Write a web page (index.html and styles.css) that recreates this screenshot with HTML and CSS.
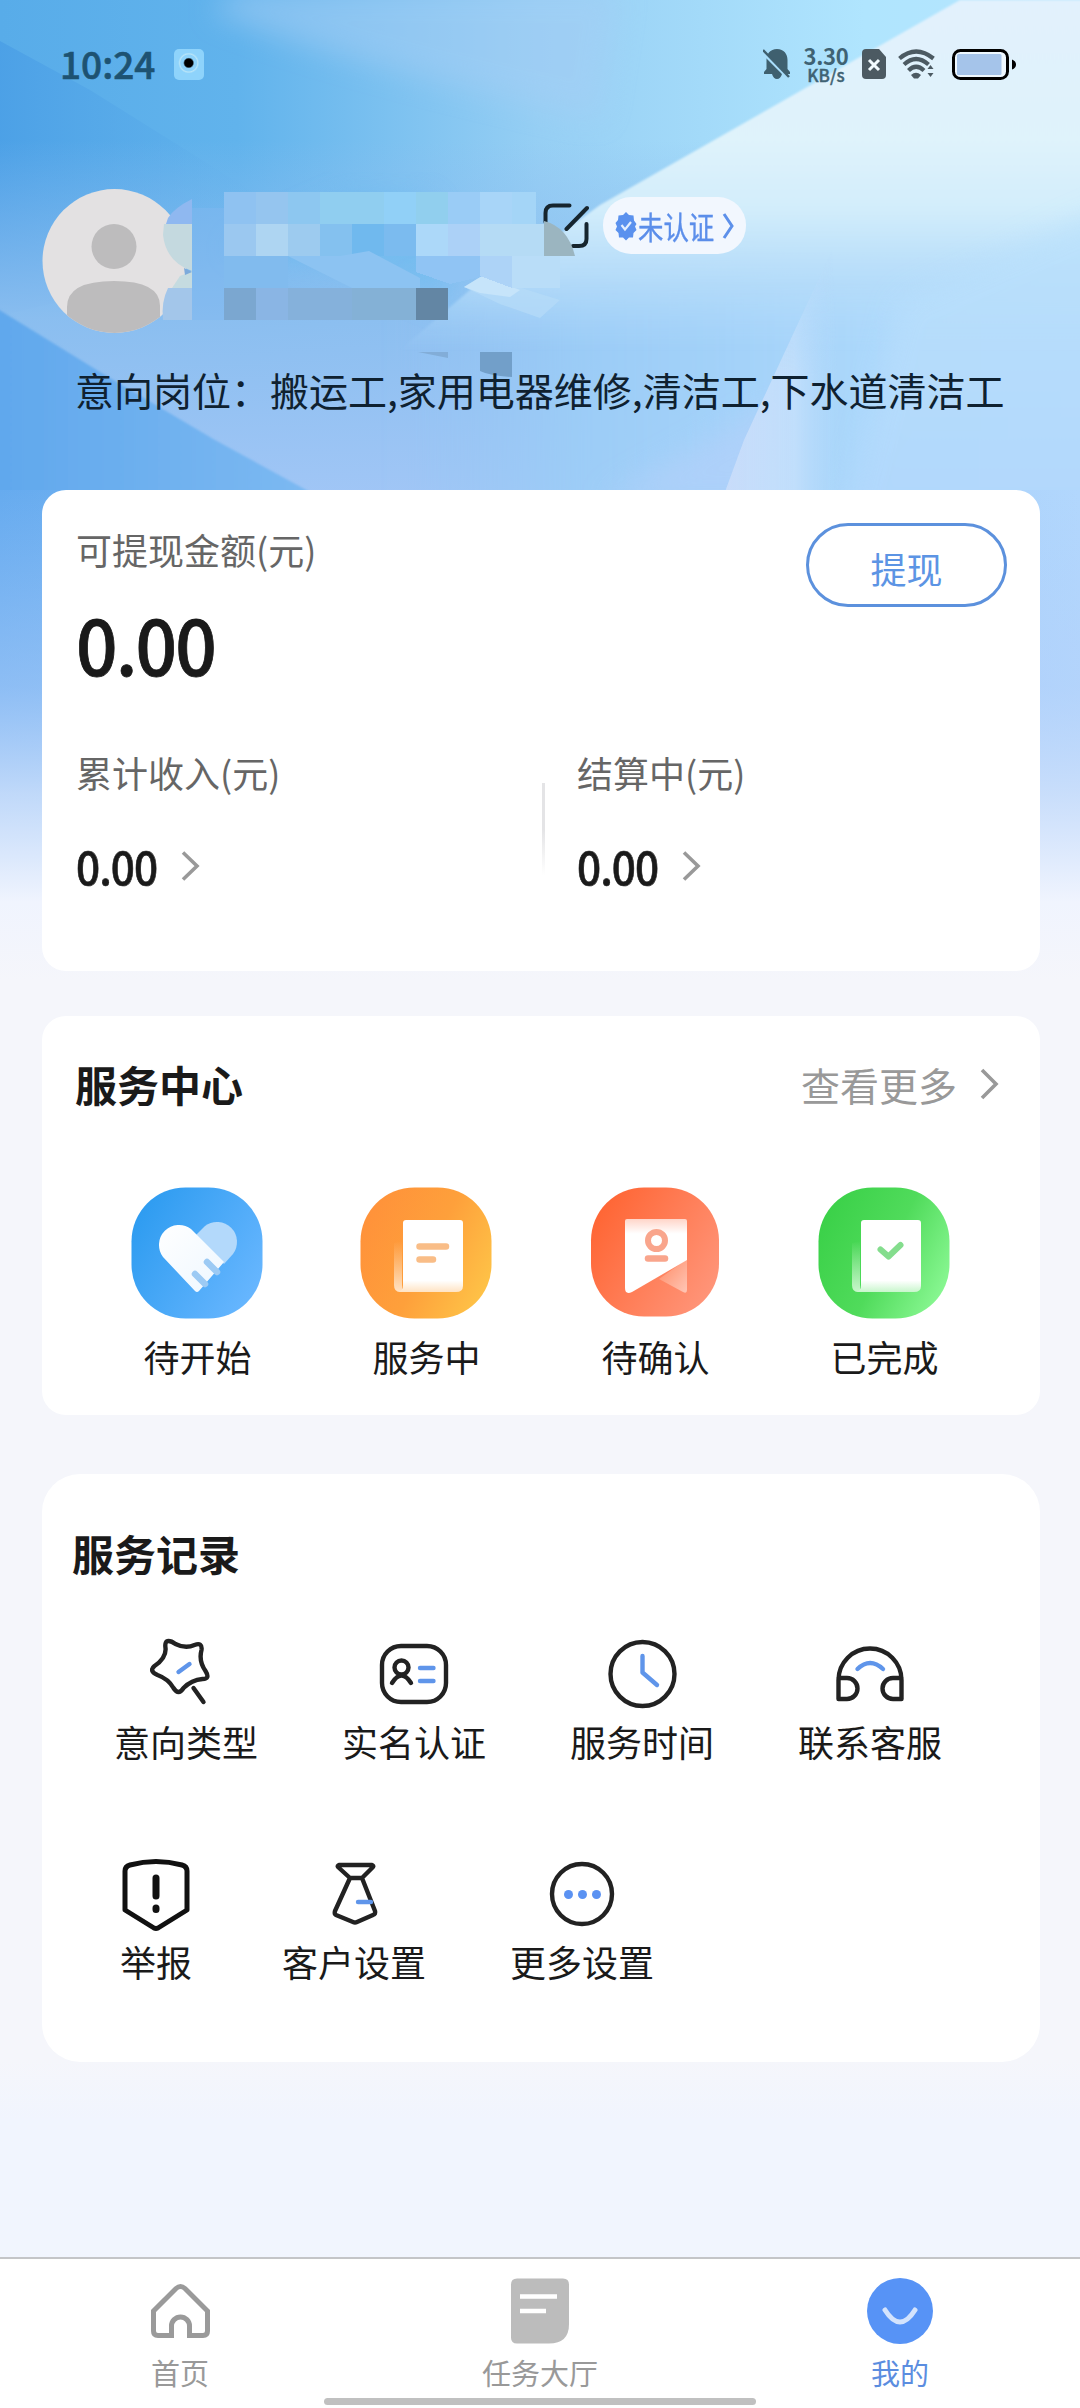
FILE: index.html
```html
<!DOCTYPE html>
<html lang="zh-CN">
<head>
<meta charset="utf-8">
<title>我的</title>
<link rel="stylesheet" href="styles.css">
</head>
<body>
<div class="page">
  <svg class="backdrop" viewBox="0 0 1080 980" aria-hidden="true">
    <defs>
      <linearGradient id="sky" x1="0" y1="0" x2="1" y2="0">
        <stop offset="0" stop-color="#58ace9"/><stop offset=".22" stop-color="#61b3ec"/><stop offset=".5" stop-color="#96cff4"/><stop offset=".8" stop-color="#b0e5fe"/><stop offset="1" stop-color="#b5e5fe"/>
      </linearGradient>
      <linearGradient id="wedge" x1="0" y1="0" x2="1" y2="0">
        <stop offset="0" stop-color="#4a9fe6"/><stop offset=".5" stop-color="#58aae9" stop-opacity=".6"/><stop offset="1" stop-color="#68baee" stop-opacity="0"/>
      </linearGradient>
      <linearGradient id="low" x1="0" y1="0" x2="0" y2="1">
        <stop offset="0" stop-color="#8dbcf0" stop-opacity="0"/><stop offset=".5" stop-color="#8dbff0" stop-opacity=".95"/><stop offset="1" stop-color="#a1c6f6"/>
      </linearGradient>
      <linearGradient id="ray" x1="0" y1="0" x2="0" y2="1">
        <stop offset="0" stop-color="#e2f1fd"/><stop offset=".4" stop-color="#dff3fb"/><stop offset=".6" stop-color="#d2edfb"/><stop offset=".78" stop-color="#bfe2fb" stop-opacity=".8"/><stop offset="1" stop-color="#b0d9fb" stop-opacity="0"/>
      </linearGradient>
      <linearGradient id="base" x1="0" y1="0" x2="1" y2="0">
        <stop offset="0" stop-color="#98c6f5" stop-opacity="0"/><stop offset=".22" stop-color="#9ccdf7" stop-opacity=".9"/><stop offset=".6" stop-color="#acd8fb"/><stop offset="1" stop-color="#b4d9fd"/>
      </linearGradient>
      <linearGradient id="facet" x1="0" y1="0" x2="1" y2="0">
        <stop offset="0" stop-color="#c8dcfa"/><stop offset=".6" stop-color="#c5e0fb" stop-opacity=".85"/><stop offset="1" stop-color="#b6dafc" stop-opacity="0"/>
      </linearGradient>
      <linearGradient id="facetfade" x1="0" y1="0" x2="0" y2="1">
        <stop offset="0" stop-color="#fff" stop-opacity=".3"/><stop offset=".5" stop-color="#fff"/>
      </linearGradient>
      <mask id="facetmask"><rect x="700" y="250" width="180" height="250" fill="url(#facetfade)"/></mask>
      <linearGradient id="corner" x1="0" y1="0" x2="0" y2="1">
        <stop offset="0" stop-color="#bce3fc"/><stop offset="1" stop-color="#b2d7fd"/>
      </linearGradient>
      <linearGradient id="deep" x1="0" y1="0" x2="1" y2="0">
        <stop offset="0" stop-color="#5fa7ec"/><stop offset="1" stop-color="#7cb9f2"/>
      </linearGradient>
      <linearGradient id="flanks" x1="0" y1="0" x2="1" y2="0">
        <stop offset="0" stop-color="#66abef"/><stop offset="1" stop-color="#b2d7fd"/>
      </linearGradient>
      <linearGradient id="fade" x1="0" y1="0" x2="0" y2="1">
        <stop offset="0" stop-color="#b0cdfa" stop-opacity="0"/><stop offset=".4" stop-color="#b4d0fa" stop-opacity=".5"/><stop offset=".62" stop-color="#ccdffb" stop-opacity=".88"/><stop offset=".84" stop-color="#f0f4fe"/><stop offset="1" stop-color="#f5f6fb"/>
      </linearGradient>
      <filter id="soft" x="-20%" y="-20%" width="140%" height="140%"><feGaussianBlur stdDeviation="14"/></filter>
      <filter id="edge"><feGaussianBlur stdDeviation="1"/></filter>
    </defs>
    <rect width="1080" height="500" fill="url(#sky)"/>
    <path d="M210 12L240 -10H620L600 120Q330 60 210 12Z" fill="#a5cdf4" opacity=".5" filter="url(#soft)"/>
    <path d="M-20 30L90 90L330 240L-20 320Z" fill="url(#wedge)"/>
    <rect y="140" width="1080" height="360" fill="url(#low)"/>
    <path d="M225 250L350 195L430 200L460 310L340 262Z" fill="#65b9ee" opacity=".5" filter="url(#soft)"/>
    <path d="M400 280H1200V560H400Z" fill="url(#base)" filter="url(#soft)"/>
    <path d="M960 0L600 205L545 245L470 290L400 350H1100V0Z" fill="url(#ray)" filter="url(#edge)"/>
    <path d="M1140 195L900 300L840 530H1140Z" fill="url(#corner)" opacity=".8" filter="url(#soft)"/>
    <path d="M690 450L780 400L760 500H600Z" fill="#b2d0fa" opacity=".7" filter="url(#soft)"/>
    <path d="M832 250L744 440L722 500H842Z" fill="url(#facet)" mask="url(#facetmask)"/>
    <path d="M-20 298L100 372L215 440L310 492V560H-20Z" fill="url(#deep)" filter="url(#edge)"/>
    <rect y="490" width="1080" height="490" fill="url(#flanks)"/>
    <rect y="490" width="1080" height="490" fill="url(#fade)"/>
  </svg>

  <header class="status">
    <span class="clock">10:24</span>
    <span class="recorder"></span>
    <span class="spacer"></span>
    <svg class="st-bell" width="28" height="32" viewBox="0 0 28 32">
      <path d="M14 1C7 1 3.500 6 3.500 12V21L1 24V26H9Q10.500 31 14 31T19 26H27V24L24.500 21V12C24.500 6 21 1 14 1Z" fill="#3f606f"/>
      <path d="M0 5L26 31" stroke="#a9defb" stroke-width="3"/>
      <path d="M0 2L26 29" stroke="#3f606f" stroke-width="2.500"/>
    </svg>
    <span class="speed"><b>3.30</b><i>KB/s</i></span>
    <svg class="st-sim" width="24" height="30" viewBox="0 0 24 30">
      <path d="M4 0H17L24 8V26Q24 30 20 30H4Q0 30 0 26V4Q0 0 4 0Z" fill="#4c5a62"/>
      <path d="M7 11L17 21M17 11L7 21" stroke="#f2fbff" stroke-width="3"/>
    </svg>
    <svg class="st-wifi" width="38" height="30" viewBox="0 0 38 30">
      <g fill="none" stroke="#4c5a62" stroke-width="4.200"><path d="M1.500 9.500Q18 -4.500 35.500 9.500"/><path d="M6 15.500Q18 4.500 30.500 15.500"/><path d="M10.500 21.500Q18 14 26 21.500"/></g>
      <path d="M13 26Q18 21.500 23 26L20 29.500H16Z" fill="#4c5a62"/>
      <path d="M29.500 20L32.500 16L35.500 20ZM29.500 24L32.500 28L35.500 24Z" fill="#4c5a62"/>
    </svg>
    <svg class="st-battery" width="65" height="31" viewBox="0 0 65 31">
      <rect x="1.500" y="1.500" width="54" height="28" rx="7" fill="#eef8ff" stroke="#000" stroke-width="3"/>
      <rect x="5" y="5" width="44.500" height="21" rx="1.500" fill="#a5c4ea"/>
      <path d="M60 10.500Q64 12 64 15.500T60 20.500Z" fill="#000"/>
    </svg>
  </header>

  <section class="profile">
    <svg class="avatar" width="146" height="146" viewBox="0 0 146 146">
      <defs><clipPath id="face"><circle cx="72.500" cy="72" r="72"/></clipPath></defs>
      <g clip-path="url(#face)">
        <rect width="146" height="146" fill="#e3e1e2"/>
        <circle cx="72" cy="57.500" r="22.500" fill="#bdbcbd"/>
        <path d="M25 146V118Q25 92 72 92T118 118V146Z" fill="#bdbcbd"/>
      </g>
    </svg>
    <svg class="edit" width="46" height="46" viewBox="543 202 46 46">
      <path d="M545.500 222V213Q545.500 205.500 553 205.500H569.500M587 208L566.500 229M586.500 224V239Q586.500 246 579 246H573" fill="none" stroke="#16252e" stroke-width="4" stroke-linecap="round"/>
    </svg>
    <div class="badge">
      <svg width="22" height="30" viewBox="0 0 22 30">
        <path d="M11 1L14 4L18.500 4.500L19 9.500L21.500 13L20 15.500L21.500 19L18.500 22L18 26.500L14 26.500L11 29.500L8 26.500L4 26.500L3.500 22L0.500 19L2 15.500L0.500 12L3 9L3.500 4.500L8 4Z" fill="#5a91ee"/>
        <path d="M6.500 14L10 18.500L16 11" fill="none" stroke="#e4effe" stroke-width="2.200"/>
      </svg>
      <span class="badge-text">未认证</span>
      <svg width="12" height="28" viewBox="0 0 12 28"><path d="M2 2L10 14L2 26" fill="none" stroke="#5d90ea" stroke-width="3"/></svg>
    </div>
    <svg class="mosaic" viewBox="160 190 430 190" width="430" height="190" aria-hidden="true">
      <path d="M168 218Q174 208 192 199V224H166Z" fill="#8fb8f0"/>
      <path d="M164 224H192V271Q166 262 163 235Z" fill="#c4d9df"/>
      <path d="M192 271L180 276L172 288H192Z" fill="#c5dbe0"/>
      <path d="M184 268L192 272L185 275Z" fill="#7daadb"/>
      <path d="M168 288H192V320H163Q161 302 168 288Z" fill="#a3c6ea"/>
      <path d="M464 287L482 276L560 300L540 318L500 304Z" fill="#b6dbf8" opacity=".7"/>
      <path d="M464 287L482 276L520 290L510 297L480 293Z" fill="#c6e4fa"/>
      <g shape-rendering="crispEdges">
        <path d="M192 208H224V320H192Z" fill="#80b7ef" opacity=".5"/>
        <path d="M224 192H256V224H224Z" fill="#8fc2f1"/><path d="M256 192H288V224H256Z" fill="#95c5ef"/><path d="M288 192H320V224H288Z" fill="#8dc7f0"/><path d="M320 192H384V224H320Z" fill="#90cef0"/><path d="M384 192H416V224H384Z" fill="#91d0f7"/><path d="M416 192H448V224H416Z" fill="#91cfee"/><path d="M448 192H480V224H448Z" fill="#9accf6"/><path d="M480 192H512V224H480Z" fill="#a8d5f8"/><path d="M512 192H536V224H512Z" fill="#a4d5f7"/>
        <path d="M224 224H256V256H224Z" fill="#9bc8f0"/><path d="M256 224H288V256H256Z" fill="#aed5f2"/><path d="M288 224H320V256H288Z" fill="#9dcbef"/><path d="M320 224H352V256H320Z" fill="#84c1ef"/><path d="M352 224H384V256H352Z" fill="#70b9ee"/><path d="M384 224H416V256H384Z" fill="#7bbbef"/><path d="M416 224H448V256H416Z" fill="#acd8f9"/><path d="M448 224H480V256H448Z" fill="#acd1f7"/><path d="M480 224H544V256H480Z" fill="#b5dbf5"/>
        <path d="M224 256H288V288H224Z" fill="#81bbee"/><path d="M448 256H480V277L450 284L416 272V256Z" fill="#90c4f4"/><path d="M480 256H512V288L480 276Z" fill="#add3f7"/><path d="M512 256H560V288H512Z" fill="#b9ddf8"/>
        <path d="M224 288H256V320H224Z" fill="#7ba7d0"/><path d="M256 288H288V320H256Z" fill="#8ab5e4"/><path d="M288 288H352V320H288Z" fill="#85b1db"/><path d="M352 288H416V320H352Z" fill="#84b1d6"/><path d="M416 288H448V320H416Z" fill="#6386a4"/>
      </g>
      <path d="M352 288L288 256L340 256L369 251L420 278V288Z" fill="#8cc3f2"/>
      <path d="M418 352H448V358Z" fill="#82add8"/>
      <path d="M480 352H512V377Q490 376 480 371Z" fill="#729fc9"/>
      <path d="M544 221Q568 227 575 256H544Z" fill="#9bb5c0"/>
    </svg>
  </section>
  <p class="intent">意向岗位：搬运工,家用电器维修,清洁工,下水道清洁工</p>

  <main class="cards">
    <section class="card wallet">
      <div class="wallet-head">
        <div>
          <div class="caption">可提现金额(元)</div>
          <div class="balance">0.00</div>
        </div>
        <button class="withdraw">提现</button>
      </div>
      <div class="stats">
        <div class="stat">
          <div class="caption">累计收入(元)</div>
          <div class="stat-value"><span>0.00</span><svg width="20" height="32" viewBox="0 0 20 32"><path d="M3 2.500L17 16L3 29.500" fill="none" stroke="#999" stroke-width="3.600"/></svg></div>
        </div>
        <div class="rule"></div>
        <div class="stat">
          <div class="caption">结算中(元)</div>
          <div class="stat-value"><span>0.00</span><svg width="20" height="32" viewBox="0 0 20 32"><path d="M3 2.500L17 16L3 29.500" fill="none" stroke="#999" stroke-width="3.600"/></svg></div>
        </div>
      </div>
    </section>

    <section class="card center">
      <div class="center-head">
        <h2>服务中心</h2>
        <a class="more">查看更多<svg width="20" height="32" viewBox="0 0 20 32"><path d="M3 2L17 16L3 30" fill="none" stroke="#999" stroke-width="3.600"/></svg></a>
      </div>
      <div class="orders">
        <div class="order">
          <svg width="132" height="132" viewBox="0 0 132 132">
            <defs><linearGradient id="blue" x1="0" y1=".2" x2="1" y2=".8"><stop offset="0" stop-color="#2c9bf0"/><stop offset="1" stop-color="#69b7ff"/></linearGradient>
            <linearGradient id="palm" x1="0" y1="0" x2="1" y2="1"><stop offset="0" stop-color="#fff"/><stop offset="1" stop-color="#eef7ff"/></linearGradient></defs>
            <rect x=".5" y=".5" width="131" height="131" rx="54" fill="url(#blue)"/>
            <path d="M65 48L74 39A20 20 0 0 1 102 67L93 77Z" fill="#b3d9fb"/>
            <path d="M32 70A20 20 0 0 1 60 42L93 75L68 104Q66 106 64 104Z" fill="url(#palm)"/>
            <path d="M76 75L86 85M64 87L74 97" stroke="#9ccaf4" stroke-width="6.500" stroke-linecap="round"/>
          </svg>
          <span>待开始</span>
        </div>
        <div class="order">
          <svg width="132" height="132" viewBox="0 0 132 132">
            <defs><linearGradient id="orange" x1="0" y1=".3" x2="1" y2=".8"><stop offset="0" stop-color="#ff923a"/><stop offset=".5" stop-color="#fea03b"/><stop offset="1" stop-color="#fec548"/></linearGradient>
            <linearGradient id="sheetO" x1="0" y1="0" x2="0" y2="1"><stop offset=".84" stop-color="#fff"/><stop offset="1" stop-color="#ffe3c3"/></linearGradient>
            <linearGradient id="flapO" x1="0" y1="0" x2="0" y2="1"><stop offset="0" stop-color="#ffd9b0" stop-opacity="0"/><stop offset="1" stop-color="#ffe3c6"/></linearGradient></defs>
            <rect x=".5" y=".5" width="131" height="131" rx="54" fill="url(#orange)"/>
            <path d="M34 56Q42 54 42 54V105H40Q34 105 34 98Z" fill="url(#flapO)"/>
            <path d="M46 33H100Q103 33 103 36V99Q103 105 96 105H37Q43 105 43 98V36Q43 33 46 33Z" fill="url(#sheetO)"/>
            <path d="M59.500 59.500H86M59.500 72.500H73" stroke="#f9bd87" stroke-width="6.500" stroke-linecap="round"/>
          </svg>
          <span>服务中</span>
        </div>
        <div class="order">
          <svg width="132" height="132" viewBox="0 0 132 132">
            <defs><linearGradient id="red" x1="0" y1=".2" x2="1" y2=".8"><stop offset="0" stop-color="#ff6432"/><stop offset="1" stop-color="#ff967b"/></linearGradient>
            <linearGradient id="sheetR" x1="0" y1="0" x2="0" y2="1"><stop offset="0" stop-color="#ffd5c9"/><stop offset=".2" stop-color="#fff"/></linearGradient>
            <linearGradient id="foldR" x1="0" y1="0" x2="1" y2="1"><stop offset="0" stop-color="#ff8a63"/><stop offset="1" stop-color="#ffc6b6"/></linearGradient></defs>
            <rect x="2" y=".5" width="128" height="129" rx="53" fill="url(#red)"/>
            <path d="M98 72V103Q98 107 94 105L70 92Z" fill="url(#foldR)"/>
            <path d="M38 32H96Q98 32 98 34V73L43 105Q36 108 36 101V34Q36 32 38 32Z" fill="url(#sheetR)"/>
            <circle cx="67.500" cy="53.500" r="8.500" fill="none" stroke="#f9a58c" stroke-width="6"/>
            <path d="M59 71.500H76" stroke="#f9a58c" stroke-width="6.500" stroke-linecap="round"/>
          </svg>
          <span>待确认</span>
        </div>
        <div class="order">
          <svg width="132" height="132" viewBox="0 0 132 132">
            <defs><linearGradient id="green" x1="0" y1=".3" x2="1" y2=".8"><stop offset="0" stop-color="#3bd149"/><stop offset=".5" stop-color="#50db5b"/><stop offset="1" stop-color="#8df996"/></linearGradient>
            <linearGradient id="sheetG" x1="0" y1="0" x2="0" y2="1"><stop offset=".84" stop-color="#fff"/><stop offset="1" stop-color="#c8f6cc"/></linearGradient>
            <linearGradient id="flapG" x1="0" y1="0" x2="0" y2="1"><stop offset="0" stop-color="#c8f6cc" stop-opacity="0"/><stop offset="1" stop-color="#c8f6cc"/></linearGradient></defs>
            <rect x=".5" y=".5" width="131" height="131" rx="54" fill="url(#green)"/>
            <path d="M34 56Q42 54 42 54V105H40Q34 105 34 98Z" fill="url(#flapG)"/>
            <path d="M46 33H100Q103 33 103 36V99Q103 105 96 105H37Q43 105 43 98V36Q43 33 46 33Z" fill="url(#sheetG)"/>
            <path d="M62.500 62.500L70.500 69.500L82.500 58" fill="none" stroke="#84dd8d" stroke-width="6" stroke-linecap="round" stroke-linejoin="round"/>
          </svg>
          <span>已完成</span>
        </div>
      </div>
    </section>

    <section class="card records">
      <h2>服务记录</h2>
      <div class="tools">
        <div class="tool">
          <svg width="72" height="76" viewBox="150.500 1636 72 76"><path d="M169 1641Q172 1641 176 1644Q186 1649 195 1645Q203 1642 202 1650Q199 1661 206 1671Q211 1679 203 1679Q192 1680 184 1688Q179 1696 174 1688Q169 1679 158 1675Q149 1671 155 1666Q167 1658 166 1648Q165 1641 169 1641Z"/><path d="M194 1688L204 1702"/><path class="accent" d="M179 1672L190 1664"/></svg>
          <span>意向类型</span>
        </div>
        <div class="tool">
          <svg width="72" height="76" viewBox="378 1636 72 76"><rect x="382" y="1646" width="64" height="56" rx="19"/><circle cx="401.500" cy="1667.500" r="7"/><path d="M392 1683Q401.500 1668 411 1683"/><path class="accent" d="M420 1668H433.500M420 1681H433.500"/></svg>
          <span>实名认证</span>
        </div>
        <div class="tool">
          <svg width="72" height="76" viewBox="606 1636 72 76"><circle cx="642.500" cy="1674" r="32"/><path class="accent" d="M642.500 1656V1672.500L657 1685"/></svg>
          <span>服务时间</span>
        </div>
        <div class="tool">
          <svg width="72" height="76" viewBox="834 1636 72 76"><path d="M838.500 1699V1680A31.500 31.500 0 0 1 901.500 1680V1699H893A10.500 10.500 0 0 1 893 1678H901.500M838.500 1678H847A10.500 10.500 0 0 1 847 1699H838.500"/><path class="accent" d="M857.500 1669Q870 1657 883 1669"/></svg>
          <span>联系客服</span>
        </div>
      </div>
      <div class="tools second">
        <div class="tool narrow">
          <svg width="72" height="76" viewBox="120 1856 72 76"><g stroke="#111" stroke-width="5"><path d="M130 1865Q156 1858 182 1865Q187 1866.500 187 1871V1910L158 1928Q156 1929 154 1928L125 1910V1871Q125 1866.500 130 1865Z"/><path d="M156 1878V1896M156 1908V1909.500" stroke-width="7"/></g></svg>
          <span>举报</span>
        </div>
        <div class="tool">
          <svg width="72" height="76" viewBox="318 1856 72 76"><path d="M339 1865H372Q374 1866 373 1867L362 1878H350L338 1867Q337 1866 339 1865ZM350 1878L335 1911Q334 1914 336 1915L353 1922Q355 1923 357 1922L373 1915Q376 1914 375 1911L362 1878"/><path class="accent" d="M358 1902H371"/></svg>
          <span>客户设置</span>
        </div>
        <div class="tool">
          <svg width="72" height="76" viewBox="546.500 1856 72 76"><circle cx="582.500" cy="1894" r="30"/><g class="dots"><circle cx="569" cy="1894.500" r="4.500"/><circle cx="583" cy="1894.500" r="4.500"/><circle cx="597" cy="1894.500" r="4.500"/></g></svg>
          <span>更多设置</span>
        </div>
      </div>
    </section>
  </main>

  <nav class="tabs">
    <a class="tab">
      <svg width="72" height="72" viewBox="144 2275 72 72"><path d="M153.500 2311L176 2288.500Q180.500 2284.500 185 2288.500L207.500 2311V2331Q207.500 2335.500 203 2335.500H189.500V2326A9 9 0 0 0 171.500 2326V2335.500H158Q153.500 2335.500 153.500 2331Z" fill="none" stroke="#9a9a9a" stroke-width="5"/></svg>
      <span>首页</span>
    </a>
    <a class="tab">
      <svg width="72" height="72" viewBox="504 2275 72 72"><path d="M517 2278.500H563Q569 2278.500 569 2284.500V2324Q569 2343.500 549 2343.500H517Q511 2343.500 511 2337.500V2284.500Q511 2278.500 517 2278.500Z" fill="#bcbcbc"/><path d="M520 2296.500H557M520 2311H546" stroke="#fff" stroke-width="4.500"/></svg>
      <span>任务大厅</span>
    </a>
    <a class="tab active">
      <svg width="72" height="72" viewBox="864 2275 72 72"><circle cx="900" cy="2311" r="33" fill="#5793f6"/><path d="M885 2310Q900 2334 915 2310" fill="none" stroke="#d3e3fd" stroke-width="5" stroke-linecap="round"/></svg>
      <span>我的</span>
    </a>
    <div class="home-bar"></div>
  </nav>
</div>
</body>
</html>
```
FILE: styles.css
```css
* { box-sizing: border-box; margin: 0; padding: 0; }

body {
  background: #f5f6fb;
  font-family: "Noto Sans CJK SC", "Noto Sans", sans-serif;
  color: #1a1a1a;
}

svg { display: block; flex: none; }

.page {
  position: relative;
  width: 1080px;
  height: 2408px;
  overflow: hidden;
  display: flex;
  flex-direction: column;
  background: linear-gradient(#f5f6fb 0, #f5f6fb 2060px, #f1f5fe 2120px);
}

.backdrop { position: absolute; left: 0; top: 0; width: 1080px; height: 980px; }

.status {
  position: relative;
  height: 128px;
  padding: 0 64px 0 60px;
  display: flex;
  align-items: center;
}
.clock {
  width: 114px;
  font-size: 37px; font-weight: 500; line-height: 48px;
  color: #1d5272; white-space: nowrap;
  -webkit-text-stroke: .6px #1d5272;
  padding-bottom: 3px;
}
.recorder {
  width: 30px; height: 31px; border-radius: 5px;
  background: radial-gradient(circle at 49% 45%, #000 0 4px, #8ed3fb 5.500px 8px, #b9e5f8 9px, #8ed3fb 10.500px);
}
.spacer { flex: 1; }
.speed {
  width: 46px; margin: 0 13px 0 12px;
  display: flex; flex-direction: column; align-items: center;
  color: #3f6273;
}
.speed b { font-size: 22px; font-weight: 700; line-height: 22px; letter-spacing: -.3px; margin-top: -2px; }
.speed i { font-size: 17px; font-style: normal; font-weight: 500; line-height: 17px; -webkit-text-stroke: .4px #3f6273; }
.st-wifi { margin-left: 12px; }
.st-battery { margin-left: 16px; margin-right: -1px; }

.profile {
  position: relative;
  height: 207px;
  padding: 61px 0 0 42px;
  display: flex;
  align-items: flex-start;
}
.edit { margin: 13px 0 0 355px; }
.badge {
  margin: 8px 0 0 14px;
  width: 143px; height: 57px; border-radius: 28px;
  background: #f2f7fe;
  display: flex; align-items: center;
  padding-left: 12px;
}
.badge-text {
  width: 77px; margin: 0 7px 0 1px;
  font-size: 31px; line-height: 44px; color: #5b8eea;
  white-space: nowrap;
  -webkit-text-stroke: .4px #5b8eea;
  transform: scaleX(.82); transform-origin: 0 50%;
}
.mosaic { position: absolute; left: 160px; top: 62px; }

.intent {
  position: relative;
  margin-top: 25px;
  padding-left: 75px;
  font-size: 39px; line-height: 58px;
  color: #0f2130;
  white-space: nowrap;
}

.cards {
  position: relative;
  padding: 72px 40px 0 42px;
  display: flex;
  flex-direction: column;
}
.card { background: #fff; border-radius: 24px; }
h2 { font-size: 42px; line-height: 60px; font-weight: 700; }

.wallet { height: 481px; padding: 33px 33px 0 34px; }
.wallet-head { display: flex; justify-content: space-between; align-items: flex-start; }
.caption { font-size: 36px; line-height: 52px; color: #666; }
.balance {
  margin-top: 28px;
  font-size: 76px; line-height: 80px; font-weight: 500; letter-spacing: -2px;
  -webkit-text-stroke: .8px #1a1a1a;
  transform: scaleX(.96); transform-origin: 0 50%;
}
.withdraw {
  width: 201px; height: 84px; border-radius: 42px;
  border: 3px solid #5c91dd; background: #fff;
  font: inherit; font-size: 36px; color: #5c94e4;
  padding-top: 5px;
}
.stats { margin-top: 63px; display: flex; }
.stat { flex: none; width: 466px; }
.stat:last-child { width: auto; }
.rule { flex: none; width: 3px; height: 92px; margin: 37px 32px 0 0; background: linear-gradient(#e4e4e6 50%, #fff); }
.stat-value {
  margin-top: 43px;
  display: flex; align-items: center; gap: 22px;
  font-size: 45px; line-height: 50px; font-weight: 500; letter-spacing: -1px;
}
.stat-value span {
  width: 82px; white-space: nowrap;
  -webkit-text-stroke: .6px #1a1a1a;
  transform: scaleX(.94); transform-origin: 0 50%;
}

.center { height: 399px; margin-top: 45px; padding: 38px 41px 0 33px; }
.center-head { display: flex; justify-content: space-between; align-items: center; }
.more { display: flex; align-items: center; gap: 22px; font-size: 39px; line-height: 60px; color: #999; }
.orders { display: grid; grid-template-columns: repeat(4, 229px); margin: 73px 0 0 7px; }
.order { display: flex; flex-direction: column; align-items: center; gap: 11px; font-size: 36px; line-height: 52px; }
.order span { padding-left: 2px; }

.records { height: 588px; margin-top: 59px; padding: 49px 30px 0; border-radius: 38px; }
.tools { display: flex; margin-top: 53px; }
.tool { width: 228px; display: flex; flex-direction: column; align-items: center; gap: 3px; font-size: 36px; line-height: 52px; }
.tool svg { fill: none; stroke: #222; stroke-width: 4.400px; stroke-linecap: round; stroke-linejoin: round; }
.tool .accent { stroke: #5f95ea; }
.tool .dots { fill: #5b92f2; stroke: none; }
.second { margin-top: 89px; }
.narrow { width: 168px; }

.tabs {
  position: relative;
  margin-top: auto;
  height: 151px;
  background: #fff;
  border-top: 2px solid #c4c5c8;
  display: flex;
  padding-top: 16px;
}
.tab { width: 360px; display: flex; flex-direction: column; align-items: center; gap: 4px; font-size: 29px; line-height: 42px; color: #999; }
.tab.active { color: #5b8de0; }
.home-bar { position: absolute; left: 324px; bottom: 3px; width: 432px; height: 7px; border-radius: 4px; background: #c0c0c0; }
```
